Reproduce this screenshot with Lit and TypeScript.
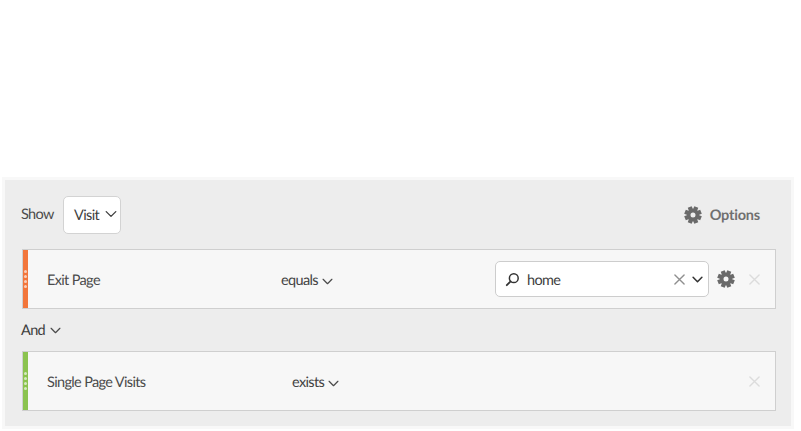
import { LitElement, html, css, svg } from "lit";
import { customElement } from "lit/decorators.js";

const chevron = (w: number, stroke = "#4b4b4b", sw = 1.1) => html`<svg class="chev" width=${w} height=${w} viewBox="0 0 10 10">
  <path d="M1 3l4 4 4-4" fill="none" stroke=${stroke} stroke-width=${sw} stroke-linecap="round" stroke-linejoin="round"/>
</svg>`;

const cross = (size: number, color: string) => html`<svg width=${size} height=${size} viewBox="0 0 12 12">
  <path d="M1 1l10 10M11 1L1 11" fill="none" stroke=${color} stroke-width="1.5" stroke-linecap="round"/>
</svg>`;

// eight-toothed cog with a hole
const gearPath = () => {
  const cx = 9, cy = 9;
  let d = "";
  for (let i = 0; i < 8; i++) {
    const a = (i * Math.PI) / 4 + Math.PI / 8;
    const pt = (r: number, o: number) =>
      `${(cx + r * Math.cos(a + o)).toFixed(2)} ${(cy + r * Math.sin(a + o)).toFixed(2)}`;
    d += `${i ? "L" : "M"}${pt(6.2, -0.36)}L${pt(8.9, -0.24)}L${pt(8.9, 0.24)}L${pt(6.2, 0.36)}`;
  }
  d += "ZM9 6.5a2.5 2.5 0 1 0 0 5a2.5 2.5 0 1 0 0-5Z";
  return svg`<path d=${d} fill="#6a6a6a" fill-rule="evenodd"/>`;
};
const gear = () => html`<svg width="18" height="18" viewBox="0 0 18 18">${gearPath()}</svg>`;

const grip = () => html`<span class="grip"><i></i><i></i><i></i><i></i></span>`;

@customElement("app-root")
export class AppRoot extends LitElement {
  static styles = css`
    :host {
      display: block;
      width: 801px;
      height: 431px;
      overflow: hidden;
      background: #fff;
      font-family: "Lato", "Liberation Sans", sans-serif;
      font-size: 14.5px;
      letter-spacing: -0.65px;
      text-rendering: geometricPrecision;
      color: #4b4b4b;
    }
    * { box-sizing: border-box; }
    .panel {
      margin: 177px 0 0 2px;
      width: 792px;
      height: 252px;
      background: #ededed;
      border: 3px solid #f8f8f8;
      padding: 16px 0 0 17px;
    }
    .top {
      display: flex;
      align-items: center;
      height: 38px;
      margin-left: -1px;
      padding-right: 16px;
    }
    .show { width: 42px; margin-top: -1px; }
    .picker {
      width: 58px;
      height: 38px;
      background: #fff;
      border: 1px solid #d3d3d3;
      border-radius: 5px;
      display: flex;
      align-items: center;
      padding-left: 10px;
      gap: 6px;
      color: #3e3e3e;
    }
    .picker .chev { margin-top: -3px; }
    .options {
      margin-left: auto;
      margin-right: 15px;
      display: flex;
      align-items: center;
      gap: 8px;
      color: #707070;
      font-weight: 700;
      letter-spacing: -0.2px;
    }
    .rule {
      display: flex;
      align-items: center;
      width: 754px;
      height: 60px;
      background: #f7f7f7;
      border: 1px solid #cfcfcf;
      border-left: none;
    }
    .rule.first { margin-top: 15px; }
    .bar {
      align-self: stretch;
      width: 6px;
      background: var(--bar);
      border-left: 1px solid #cfcfcf;
      display: flex;
      align-items: center;
      justify-content: center;
    }
    .bar.orange { --bar: #f2763b; }
    .bar.green { --bar: #8bc34f; }
    .grip {
      display: flex;
      flex-direction: column;
      gap: 2px;
    }
    .grip i {
      display: block;
      width: 3px;
      height: 3px;
      border-radius: 50%;
      background: rgba(255, 255, 255, 0.65);
    }
    .name { margin-left: 19px; padding-top: 2px; }
    .name.exit { width: 234px; }
    .name.single { width: 245px; }
    .operator {
      display: flex;
      align-items: center;
      gap: 4px;
      padding-top: 2px;
      color: #444;
    }
    .operator .chev { margin-top: 3px; }
    .operator.equals { width: 214px; }
    .search {
      width: 214px;
      height: 36px;
      background: #fff;
      border: 1px solid #cdcdcd;
      border-radius: 5px;
      display: flex;
      align-items: center;
      padding: 0 5px 0 9px;
      color: #3e3e3e;
    }
    .search .value { margin-left: 7px; flex: 1; padding-top: 2px; }
    .search .chev { margin-left: 7px; }
    .gear-btn { display: flex; margin-left: 8px; }
    .close {
      display: flex;
      margin-left: auto;
      margin-right: 15px;
    }
    .conj {
      display: flex;
      align-items: center;
      gap: 5px;
      height: 42px;
      margin-left: -1px;
      color: #3e3e3e;
    }
  `;

  render() {
    return html`
      <div class="panel">
        <div class="top">
          <span class="show">Show</span>
          <div class="picker">Visit ${chevron(12, "#3e3e3e")}</div>
          <div class="options">${gear()} Options</div>
        </div>
        <div class="rule first">
          <div class="bar orange">${grip()}</div>
          <span class="name exit">Exit Page</span>
          <div class="operator equals">equals ${chevron(11)}</div>
          <div class="search">
            <svg width="15" height="15" viewBox="0 0 15 15">
              <circle cx="8.8" cy="6.2" r="4.4" fill="none" stroke="#333" stroke-width="1.5"/>
              <path d="M5.6 9.4L1.8 13.2" stroke="#333" stroke-width="1.8" stroke-linecap="round"/>
            </svg>
            <span class="value">home</span>
            ${cross(11, "#8f8f8f")}
            ${chevron(11, "#333", 1.4)}
          </div>
          <span class="gear-btn">${gear()}</span>
          <span class="close">${cross(11, "#dcdcdc")}</span>
        </div>
        <div class="conj">And ${chevron(11)}</div>
        <div class="rule">
          <div class="bar green">${grip()}</div>
          <span class="name single">Single Page Visits</span>
          <div class="operator">exists ${chevron(11)}</div>
          <span class="close">${cross(11, "#dcdcdc")}</span>
        </div>
      </div>
    `;
  }
}
